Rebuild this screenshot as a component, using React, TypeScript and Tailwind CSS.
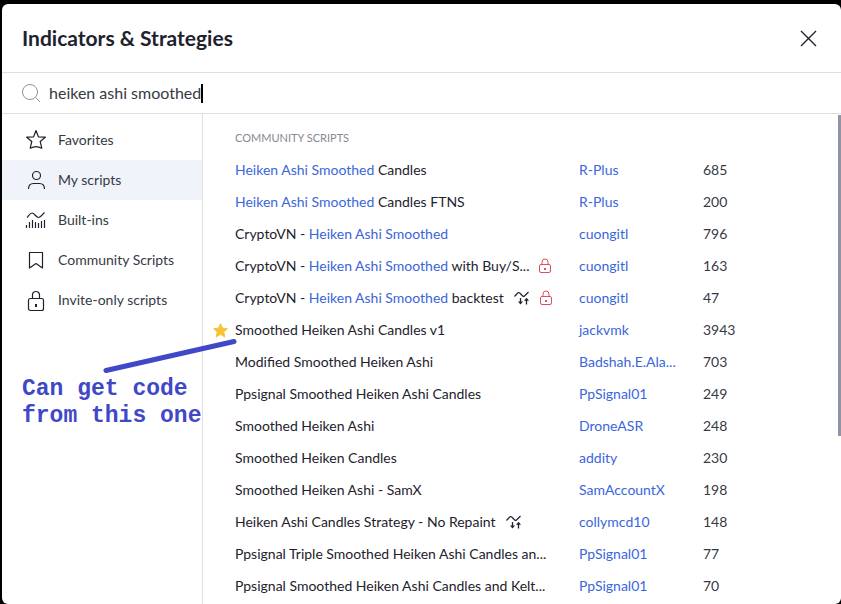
import type { ReactNode } from "react";

type Script = {
  name: ReactNode;
  author: string;
  boosts: number;
  favorite?: boolean;
  strategy?: boolean;
  locked?: boolean;
};

const match = <span className="text-[#3a66dc]">Heiken Ashi Smoothed</span>;

const scripts: Script[] = [
  { name: <>{match} Candles</>, author: "R-Plus", boosts: 685 },
  { name: <>{match} Candles FTNS</>, author: "R-Plus", boosts: 200 },
  { name: <>CryptoVN - {match}</>, author: "cuongitl", boosts: 796 },
  { name: <>CryptoVN - {match} with Buy/S...</>, author: "cuongitl", boosts: 163, locked: true },
  { name: <>CryptoVN - {match} backtest</>, author: "cuongitl", boosts: 47, strategy: true, locked: true },
  { name: "Smoothed Heiken Ashi Candles v1", author: "jackvmk", boosts: 3943, favorite: true },
  { name: "Modified Smoothed Heiken Ashi", author: "Badshah.E.Ala...", boosts: 703 },
  { name: "Ppsignal Smoothed Heiken Ashi Candles", author: "PpSignal01", boosts: 249 },
  { name: "Smoothed Heiken Ashi", author: "DroneASR", boosts: 248 },
  { name: "Smoothed Heiken Candles", author: "addity", boosts: 230 },
  { name: "Smoothed Heiken Ashi - SamX", author: "SamAccountX", boosts: 198 },
  { name: "Heiken Ashi Candles Strategy - No Repaint", author: "collymcd10", boosts: 148, strategy: true },
  { name: "Ppsignal Triple Smoothed Heiken Ashi Candles an...", author: "PpSignal01", boosts: 77 },
  { name: "Ppsignal Smoothed Heiken Ashi Candles and Kelt...", author: "PpSignal01", boosts: 70 },
];

function NavIcon({ children }: { children: ReactNode }) {
  return (
    <svg className="size-6 shrink-0" viewBox="0 0 24 24" fill="none" stroke="#1e222d" strokeWidth="1.2" aria-hidden="true">
      {children}
    </svg>
  );
}

const nav: { label: string; icon: ReactNode }[] = [
  {
    label: "Favorites",
    icon: (
      <path
        strokeLinejoin="round"
        d="M12 2.500l2.400 6.300 6.900.4-5.100 4.300 1.600 6.700c-2-1-3.600-1.600-5.800-1.600s-3.800.6-5.800 1.600l1.600-6.700L2.700 9.200l6.900-.4z"
      />
    ),
  },
  {
    label: "My scripts",
    icon: (
      <>
        <circle cx="12.500" cy="7.500" r="4" />
        <path d="M4.500 21c0-3.500 2-5.500 5-5.500h6c3 0 5 2 5 5.500" />
      </>
    ),
  },
  {
    label: "Built-ins",
    icon: (
      <>
        <path d="M3 9.500c2-2 3-4.500 5-4.500 2.500 0 4 4.500 6.500 4.500 2 0 3.500-2.500 6-5" />
        <path d="M2.500 17v3M5.500 14v6M8.500 12v8M11.500 14v6M14.500 15v5M17.500 13v7M20.500 12v8" />
      </>
    ),
  },
  {
    label: "Community Scripts",
    icon: <path strokeLinejoin="round" d="M5.500 4.500h13v15.500l-6.500-4.500-6.500 4.500z" />,
  },
  {
    label: "Invite-only scripts",
    icon: (
      <>
        <rect x="4.500" y="10.500" width="15" height="12" rx="2" />
        <path d="M8.500 10.500V7a3.500 3.500 0 0 1 7 0v3.500" />
        <path strokeWidth="2" d="M12 16v3" />
      </>
    ),
  },
];

function StrategyIcon() {
  return (
    <svg className="h-4 w-4 shrink-0" viewBox="0 0 16 16" fill="none" stroke="#1e222d" strokeWidth="1.2" role="img" aria-label="Strategy">
      <path d="M.5 6.500L3.700 3c.7-.7 1.300-.7 2 0l3 3c.6.6 1.200.6 1.800 0L14.500 2" />
      <path strokeWidth="1.3" d="M6.500 8v5M12.500 9.500v5" />
      <path fill="#1e222d" stroke="none" d="M4 11.500h5l-2.500 3zM10 10.700l2.500-3 2.500 3z" />
    </svg>
  );
}

function LockIcon() {
  return (
    <svg className="h-4 w-3 shrink-0" viewBox="0 0 12 16" fill="none" stroke="#d9525e" role="img" aria-label="Protected">
      <rect x=".5" y="6.500" width="11" height="8" rx="1.500" />
      <path d="M3 6.500V4a3 3 0 0 1 6 0v2.500" />
      <rect x="5" y="10" width="2" height="2" fill="#d9525e" stroke="none" />
    </svg>
  );
}

function Note() {
  return (
    <div className="pointer-events-none absolute top-[334px] left-5 text-[#4048c8]">
      <svg className="ml-20 h-[38px] w-36" viewBox="0 0 144 38" aria-hidden="true">
        <path d="M4 32.500L132 3.500" stroke="#4048c8" strokeWidth="5" strokeLinecap="round" />
      </svg>
      <p className="font-['Liberation_Mono','Courier_New',monospace] text-[23px] leading-[27px] font-bold">
        Can get code
        <br />
        from this one
      </p>
    </div>
  );
}

export default function App() {
  return (
    <div className="h-screen bg-black pt-1 pl-0.5 font-['Trebuchet_MS','Lato',sans-serif] text-sm text-[#363a45]">
      <section className="relative flex h-full flex-col overflow-hidden rounded-md bg-white" aria-labelledby="dialog-title">
        <header className="flex h-[69px] shrink-0 items-center justify-between border-b border-[#dedfe3] px-5">
          <h1 id="dialog-title" className="text-[21px] font-bold text-[#1e222d]">Indicators &amp; Strategies</h1>
          <button type="button" aria-label="Close" className="mr-1">
            <svg className="size-[17px]" viewBox="0 0 17 17" fill="none" stroke="#1e222d" strokeWidth="1.4" aria-hidden="true">
              <path d="M1 1l15 15M16 1L1 16" />
            </svg>
          </button>
        </header>

        <div className="flex h-[41px] shrink-0 items-center border-b border-[#dedfe3] px-5">
          <svg className="mr-2 size-[19px]" viewBox="0 0 19 19" fill="none" stroke="#8f929c" aria-hidden="true">
            <circle cx="8" cy="8" r="7.500" />
            <path d="M13.500 13.500l4.500 4.500" />
          </svg>
          <input
            type="text"
            aria-label="Search"
            defaultValue="heiken ashi smoothed"
            className="[field-sizing:content] text-base outline-none"
          />
          <span className="h-[19px] w-0.5 bg-black" />
        </div>

        <div className="flex min-h-0 flex-1">
          <nav className="w-[201px] shrink-0 border-r border-[#dedfe3] pt-1.5">
            {nav.map((item) => (
              <button
                key={item.label}
                type="button"
                className={
                  item.label === "My scripts"
                    ? "flex h-10 w-full items-center gap-2.5 bg-[#f0f3fa] pl-[22px]"
                    : "flex h-10 w-full items-center gap-2.5 pl-[22px]"
                }
              >
                <NavIcon>{item.icon}</NavIcon>
                {item.label}
              </button>
            ))}
          </nav>

          <div className="relative min-w-0 flex-1 overflow-hidden pt-2">
            <table className="w-full table-fixed text-left">
              <colgroup>
                <col className="w-8" />
                <col className="w-[344px]" />
                <col className="w-[124px]" />
                <col />
              </colgroup>
              <thead>
                <tr className="h-8">
                  <td />
                  <th colSpan={3} className="text-[11px] font-normal text-[#868993]">COMMUNITY SCRIPTS</th>
                </tr>
              </thead>
              <tbody>
                {scripts.map((script, index) => (
                  <tr key={index} className="h-8 whitespace-nowrap">
                    <td>
                      {script.favorite && (
                        <svg className="ml-2.5 size-[15px]" viewBox="0 0 15 15" fill="#f7c331" stroke="#f7c331" strokeLinejoin="round" role="img" aria-label="Favorite">
                          <path d="M7.500.8l2 4.400 4.800.5-3.600 3.200 1.100 5-4.300-2.600-4.300 2.600 1.100-5L.7 5.700l4.800-.5z" />
                        </svg>
                      )}
                    </td>
                    <td>
                      <div className="flex items-center gap-2.5">
                        <span className="text-[#1e222d]">{script.name}</span>
                        {script.strategy && <StrategyIcon />}
                        {script.locked && <LockIcon />}
                      </div>
                    </td>
                    <td>
                      <a href="#" className="text-[#3a66dc]">{script.author}</a>
                    </td>
                    <td>{script.boosts}</td>
                  </tr>
                ))}
              </tbody>
            </table>
            <div className="absolute top-px right-0 h-[321px] w-[3px] bg-[#9194a1]" />
          </div>
        </div>

        <Note />
      </section>
    </div>
  );
}
